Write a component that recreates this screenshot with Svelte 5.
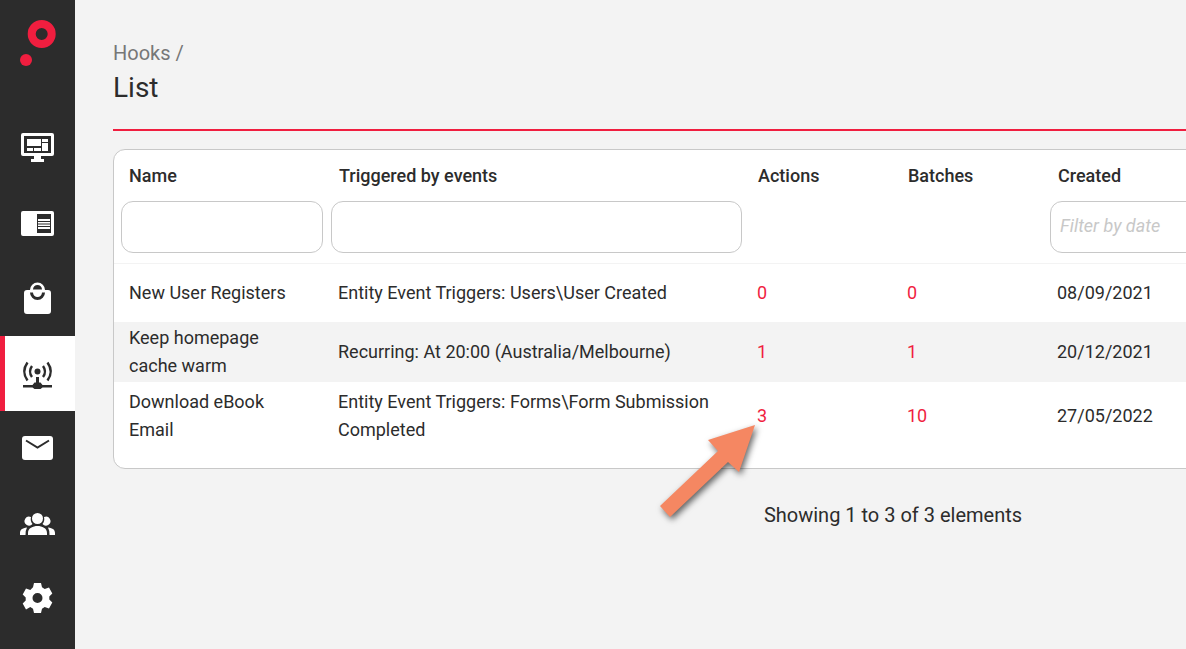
<script lang="ts">
	let active = $state('hooks');
	let name = $state('');
	let events = $state('');
	let created = $state('');

	const nav = [
		{ id: 'pages', label: 'Pages' },
		{ id: 'content', label: 'Content' },
		{ id: 'shop', label: 'Shop' },
		{ id: 'hooks', label: 'Hooks' },
		{ id: 'mail', label: 'Mail' },
		{ id: 'users', label: 'Users' },
		{ id: 'settings', label: 'Settings' }
	];

	const hooks = [
		{
			name: 'New User Registers',
			events: 'Entity Event Triggers: Users\\User Created',
			actions: 0,
			batches: 0,
			created: '08/09/2021'
		},
		{
			name: 'Keep homepage cache warm',
			events: 'Recurring: At 20:00 (Australia/Melbourne)',
			actions: 1,
			batches: 1,
			created: '20/12/2021'
		},
		{
			name: 'Download eBook Email',
			events: 'Entity Event Triggers: Forms\\Form Submission Completed',
			actions: 3,
			batches: 10,
			created: '27/05/2022'
		}
	];
</script>

<div class="app">
	<nav class="sidebar">
		<a class="logo" href="#home" aria-label="Home">
			<svg width="36" height="47" viewBox="0 0 36 47">
				<circle cx="21.7" cy="14" r="10" fill="none" stroke="#f01e3f" stroke-width="8" />
				<circle cx="6" cy="40" r="6" fill="#f01e3f" />
			</svg>
		</a>
		{#each nav as item}
			<button
				class:active={active === item.id}
				aria-label={item.label}
				onclick={() => (active = item.id)}
			>
				<svg width="37" height="37" viewBox="0 0 37 37" fill="currentColor">
					{#if item.id === 'pages'}
						<path
							fill-rule="evenodd"
							d="M4 3h29a2 2 0 0 1 2 2v19a2 2 0 0 1-2 2H22v3h3v3H12v-3h3v-3H4a2 2 0 0 1-2-2V5a2 2 0 0 1 2-2zM5 6v17h27V6z"
						/>
						<path d="M8 9h14v7H8zM23 9h6v3h-6zM8 18h6v3H8zM15 18h7v3h-7zM23 13h6v8h-6z" />
					{:else if item.id === 'content'}
						<path
							fill-rule="evenodd"
							d="M4 6h29a2 2 0 0 1 2 2v21a2 2 0 0 1-2 2H4a2 2 0 0 1-2-2V8a2 2 0 0 1 2-2zM18 9v19h14V9z"
						/>
						<path d="M19 14h12v2H19zM19 17h12v1.500H19zM19 19.500h12V21H19zM19 22h12v2H19z" />
					{:else if item.id === 'shop'}
						<path
							fill-rule="evenodd"
							d="M11 10a7.500 7.500 0 0 1 15 0h3a3 3 0 0 1 3 3v18a3 3 0 0 1-3 3H8a3 3 0 0 1-3-3V13a3 3 0 0 1 3-3zM14 9.500h9a4.500 4.500 0 0 0-9 0zM11 12.500a7.500 7.500 0 0 0 15 0h-3a4.500 4.500 0 0 1-9 0z"
						/>
					{:else if item.id === 'hooks'}
						<g fill="none" stroke="currentColor" stroke-width="2.4">
							<path d="M8.5 7.500Q2 16.500 8.500 25.500M28.500 7.500Q35 16.500 28.500 25.500" />
							<path d="M13 11Q9 16.500 13 22M24 11Q28 16.500 24 22" />
						</g>
						<circle cx="18.500" cy="16.500" r="3" />
						<path d="M17 22h3v5.500h1.500l2 2.500H33v2.500h-9.500l-2 1.500h-6l-2-1.500H4V30h9.500l2-2.500H17z" />
					{:else if item.id === 'mail'}
						<rect x="3" y="6" width="31" height="24" rx="3" />
						<path class="cut" d="M7 10.500l11.500 7L30 10.500" />
					{:else if item.id === 'users'}
						<circle cx="18.500" cy="13.500" r="5.500" />
						<path d="M12 12a4.500 4.500 0 1 0 1.500 7 8 8 0 0 1-1.500-7zM25 12a4.500 4.500 0 1 1-1.500 7 8 8 0 0 0 1.500-7z" />
						<path
							d="M9 30v-2c0-5 5-7 9.500-7s9.500 2 9.500 7v2zM1 30v-2c0-3 2-5 7-5.500Q6.500 25 6.500 30zM36 30v-2c0-3-2-5-7-5.500q1.500 2.500 1.500 7.500z"
						/>
					{:else}
						<path
							fill-rule="evenodd"
							d="M15 3h7l1 4.300 2.700 1.600 4.300-1.300 3.300 6-3 3v2.800l3 3-3.300 6-4.300-1.300-2.700 1.600-1 4.300h-7l-1-4.300-2.700-1.600L7 29.400l-3.300-6 3-3v-2.800l-3-3 3.300-6 4.300 1.300L14 7.300zM18.500 13a5 5 0 1 0 0 10 5 5 0 0 0 0-10z"
						/>
					{/if}
				</svg>
			</button>
		{/each}
	</nav>

	<main>
		<div class="content">
			<header>
				<a href="#hooks">Hooks /</a>
				<h1>List</h1>
			</header>

			<div class="card">
				<table>
					<colgroup>
						<col class="col-name" />
						<col class="col-events" />
						<col class="col-count" />
						<col class="col-count" />
						<col />
					</colgroup>
					<thead>
						<tr>
							<th>
								<label for="name">Name</label>
								<input id="name" type="text" bind:value={name} />
							</th>
							<th>
								<label for="events">Triggered by events</label>
								<input id="events" type="text" bind:value={events} />
							</th>
							<th><span>Actions</span></th>
							<th><span>Batches</span></th>
							<th>
								<label for="created">Created</label>
								<input id="created" type="text" placeholder="Filter by date" bind:value={created} />
							</th>
						</tr>
					</thead>
					<tbody>
						{#each hooks as hook}
							<tr>
								<td>{hook.name}</td>
								<td>{hook.events}</td>
								<td><a href="#actions">{hook.actions}</a></td>
								<td><a href="#batches">{hook.batches}</a></td>
								<td>{hook.created}</td>
							</tr>
						{/each}
					</tbody>
				</table>
			</div>

			<p>Showing 1 to 3 of 3 elements</p>
		</div>
	</main>

	<svg class="arrow" width="110" height="110" viewBox="0 0 110 110">
		<path d="M105 5L58 20l10 11L10 86l10 11 58-55 11 10z" fill="#f58762" />
	</svg>
</div>

<style>
	:global(body) {
		background: #f3f3f3;
	}

	.app {
		position: relative;
		display: flex;
		min-height: 100vh;
		overflow: hidden;
		color: #2c2c2c;
		font-family: Roboto, sans-serif;
		font-size: 18px;
		line-height: 28px;
	}

	.sidebar {
		display: flex;
		flex-direction: column;
		flex: none;
		width: 75px;
		background: #2c2c2c;
	}

	.logo {
		height: 91px;
		padding: 20px 0 0 20px;
	}

	.logo svg {
		display: block;
	}

	.sidebar button {
		display: flex;
		align-items: center;
		justify-content: center;
		height: 75px;
		padding: 0;
		border: none;
		color: white;
		background: none;
		cursor: pointer;
	}

	.sidebar .active {
		color: #2c2c2c;
		background: white;
		box-shadow: inset 5px 0 #f01e3f;
	}

	.cut {
		fill: none;
		stroke: #2c2c2c;
		stroke-width: 2;
	}

	main {
		flex: 1;
		min-width: 0;
		padding: 38px 0 0 38px;
	}

	/* the list keeps its full width and runs off narrow windows */
	.content {
		min-width: 1560px;
	}

	header {
		margin-bottom: 18px;
		padding-bottom: 21px;
		border-bottom: 2px solid #f01e3f;
	}

	header a {
		display: block;
		color: #777;
		font-size: 20px;
		line-height: 30px;
		text-decoration: none;
	}

	h1 {
		margin: 0;
		font-size: 28px;
		font-weight: 400;
		line-height: 40px;
	}

	.card {
		padding-bottom: 18px;
		border: 1px solid #c8c8c8;
		border-radius: 12px;
		background: white;
	}

	table {
		width: 100%;
		border-collapse: collapse;
		table-layout: fixed;
	}

	.col-name {
		width: 213px;
	}

	.col-events {
		width: 419px;
	}

	.col-count {
		width: 150px;
	}

	th {
		padding: 12px 4px 10px;
		border-bottom: 1px solid #f3f3f3;
		font-weight: 500;
		text-align: left;
		vertical-align: top;
	}

	th:first-child {
		padding-left: 7px;
	}

	th label,
	th span {
		display: block;
		padding: 0 8px;
	}

	th input {
		display: block;
		width: 100%;
		height: 52px;
		margin-top: 11px;
		padding: 0 9px 3px;
		border: 1px solid #c8c8c8;
		border-radius: 12px;
		box-sizing: border-box;
		background: white;
		font: inherit;
		font-weight: 400;
	}

	th input::placeholder {
		color: #c8c8c8;
		font-style: italic;
	}

	td {
		height: 54px;
		padding: 2px 11px;
	}

	td:first-child {
		padding: 2px 30px 2px 15px;
	}

	tbody tr:nth-child(even) {
		background: #f3f3f3;
	}

	tbody tr:last-child td {
		height: 64px;
	}

	td a {
		color: #f01e3f;
		text-decoration: none;
	}

	p {
		margin: 32px 0;
		font-size: 20px;
		text-align: center;
	}

	.arrow {
		position: absolute;
		top: 420px;
		left: 650px;
		filter: drop-shadow(2px 3px 3px rgba(0, 0, 0, 0.6));
		pointer-events: none;
	}
</style>
